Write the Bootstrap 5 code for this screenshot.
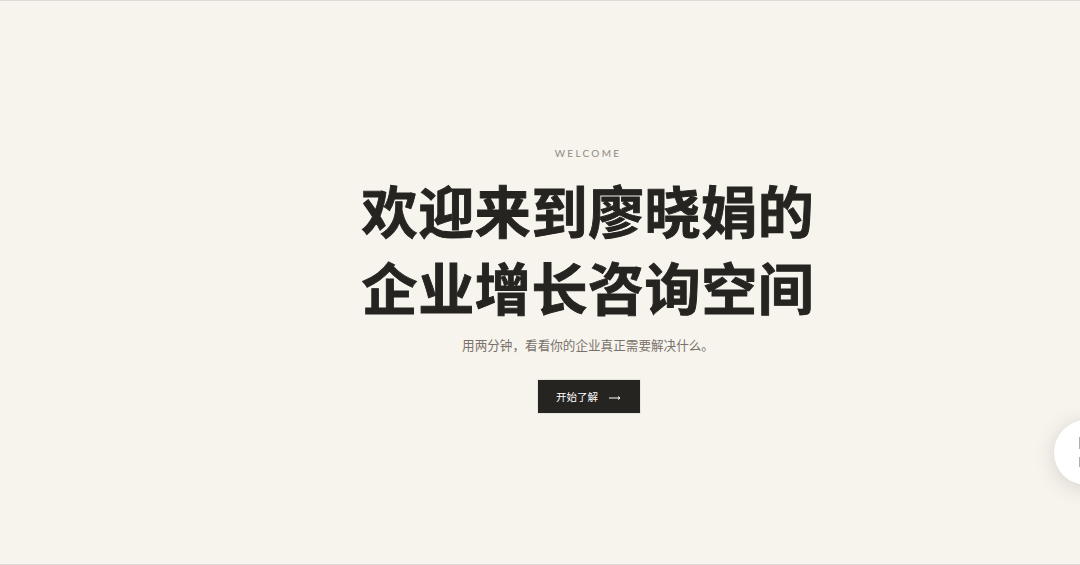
<!DOCTYPE html>
<html lang="zh-CN">
<head>
<meta charset="utf-8">
<title>欢迎</title>
<link href="https://cdn.jsdelivr.net/npm/bootstrap@5.3.0/dist/css/bootstrap.min.css" rel="stylesheet">
<style>
html,body{height:100%;overflow:hidden}
body{background:#f7f4ee;font-family:"Liberation Sans","Noto Sans CJK SC",sans-serif;color:#262421}
.page-frame{height:565px;border-top:1px solid #dedbd6;border-bottom:1px solid #dedbd6;padding:145px 0 0 96px}
.eyebrow{font-family:"Lato","Noto Sans CJK SC",sans-serif;font-size:10px;font-weight:400;letter-spacing:2.3px;color:#93897f;line-height:14px;margin:0 0 10px}
.hero-title{font-family:"Noto Sans CJK SC",sans-serif;font-weight:700;font-size:56px;letter-spacing:.6px;line-height:77px;color:#262421;-webkit-text-stroke:.9px #262421;margin:0 0 11px}
.hero-sub{font-family:"Noto Sans CJK SC",sans-serif;font-size:12.6px;line-height:20px;color:#7a726a;margin:0 0 24px}
.start-btn{width:104px;height:35px;margin-left:1px;border-radius:0;background:#262421;border:1px solid #e8e5df;color:#fff;font-size:10.5px;font-family:"Noto Sans CJK SC",sans-serif;padding:0;gap:11px}
.start-btn:hover{background:#262421;color:#fff}
.start-btn svg{display:block;margin-top:2px}
.chat-float{position:fixed;left:1054px;top:420px;width:65px;height:65px;background:#fff;border-radius:50%;box-shadow:0 3px 20px rgba(60,50,40,.18)}
.chat-mark{position:absolute;left:25px;width:2px;background:#b0b0b0}
.m1{top:17px;height:12px}
.m2{top:37px;height:10px}
</style>
</head>
<body>
<main class="page-frame text-center">
<p class="eyebrow">WELCOME</p>
<h1 class="hero-title">欢迎来到廖晓娟的<br>企业增长咨询空间</h1>
<p class="hero-sub">用两分钟，看看你的企业真正需要解决什么。</p>
<button type="button" class="btn start-btn d-inline-flex align-items-center justify-content-center">开始了解
<svg width="12" height="8" viewBox="0 0 12 8" fill="none" stroke="#fff" stroke-width="1"><path d="M0 4h11M9 2.500 11 4 9 5.500"/></svg>
</button>
</main>
<div class="chat-float"><span class="chat-mark m1"></span><span class="chat-mark m2"></span></div>
</body>
</html>
